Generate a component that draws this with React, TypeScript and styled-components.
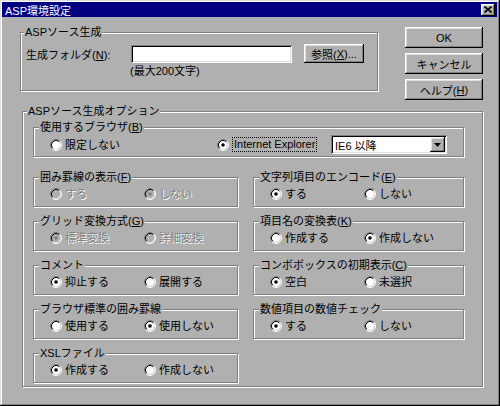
import React from 'react';
import styled, { createGlobalStyle, css } from 'styled-components';

const face = css`
  background: repeating-conic-gradient(#aaaaaa 0 25%, #b6b6b6 0 50%) 0 0 / 2px 2px fixed;
`;

const raised = css`
  box-shadow: inset -1px -1px #000, inset 1px 1px #fff, inset -2px -2px #808080, inset 2px 2px #dfdfdf;
`;

const sunken = css`
  box-shadow: inset 1px 1px #808080, inset -1px -1px #fff, inset 2px 2px #000, inset -2px -2px #dfdfdf;
`;

const GlobalStyle = createGlobalStyle`
  html, body {
    margin: 0;
    padding: 0;
  }
  body {
    font-family: "Liberation Sans", "Noto Sans CJK JP", sans-serif;
    font-size: 11px;
    color: #000;
  }
  u {
    text-decoration: underline;
    text-underline-offset: 1px;
  }
`;

const Window = styled.div`
  ${face}
  width: 500px;
  height: 406px;
  box-sizing: border-box;
  padding: 2px 3px 3px 2px;
  box-shadow: inset -1px -1px #000, inset 1px 1px #dfdfdf, inset -2px -2px #808080, inset 2px 2px #fff;
  display: flex;
  flex-direction: column;
`;

const TitleBar = styled.div`
  height: 15px;
  background: #000080;
  color: #fff;
  display: flex;
  align-items: center;
  justify-content: space-between;
  padding: 0 2px 0 3px;
  font-size: 11px;
`;

const CloseButton = styled.div`
  ${face}
  ${raised}
  width: 14px;
  height: 12px;
  display: flex;
  align-items: center;
  justify-content: center;
`;

const Body = styled.div`
  padding: 9px 0 0 18px;
`;

const TopRow = styled.div`
  display: flex;
  align-items: flex-start;
  gap: 27px;
`;

const Group = styled.fieldset<{ $width?: number }>`
  margin: 0;
  padding: 0;
  min-width: 0;
  box-sizing: border-box;
  width: ${p => (p.$width ? `${p.$width}px` : 'auto')};
  border: 1px solid #808080;
  box-shadow: inset 1px 1px #fff, 1px 1px #fff;
`;

const Legend = styled.legend<{ $inset: number }>`
  ${face}
  margin-left: ${p => p.$inset}px;
  padding: 0 1px;
  line-height: 13px;
`;

const SourceBody = styled.div`
  padding: 5px 0 12px 5px;
`;

const FolderRow = styled.div`
  display: flex;
  align-items: center;
  height: 19px;
`;

const FieldLabel = styled.span`
  width: 105px;
`;

const TextInput = styled.div`
  ${sunken}
  background: #fff;
  width: 161px;
  height: 18px;
  box-sizing: border-box;
`;

const PushButton = styled.div<{ $width: number; $height: number }>`
  ${face}
  ${raised}
  width: ${p => p.$width}px;
  height: ${p => p.$height}px;
  box-sizing: border-box;
  display: flex;
  align-items: center;
  justify-content: center;
`;

const BrowseButton = styled(PushButton)`
  margin-left: 12px;
`;

const Hint = styled.div`
  margin: 1px 0 0 104px;
  line-height: 14px;
`;

const ButtonColumn = styled.div`
  display: flex;
  flex-direction: column;
  gap: 5px;
  padding-top: 1px;
`;

const OptionsGroup = styled(Group)`
  margin: 5px 0 0 2px;
`;

const OptionsBody = styled.div`
  padding: 3px 18px 3px 10px;
`;

const BrowserRow = styled.div`
  display: flex;
  align-items: center;
  height: 19px;
  padding: 1px 16px 2px 16px;
`;

const FirstBrowser = styled.div`
  width: 167px;
`;

const Select = styled.div`
  ${sunken}
  background: #fff;
  margin-left: auto;
  width: 116px;
  height: 19px;
  box-sizing: border-box;
  padding: 2px;
  display: flex;
  align-items: center;
`;

const SelectText = styled.span`
  flex: 1;
  padding-left: 2px;
`;

const SelectArrow = styled.div`
  ${face}
  ${raised}
  width: 15px;
  height: 15px;
  display: flex;
  align-items: center;
  justify-content: center;
`;

const OptionGrid = styled.div`
  display: grid;
  grid-template-columns: 205px 211px;
  column-gap: 15px;
  row-gap: 8px;
  margin-top: 14px;
`;

const ChoiceRow = styled.div`
  display: grid;
  grid-template-columns: 94px auto;
  align-items: center;
  padding: 3px 0 5px 16px;
  line-height: 14px;
`;

const RadioOption = styled.label<{ $disabled?: boolean }>`
  display: flex;
  align-items: center;
  gap: 3px;
  line-height: 14px;
  color: ${p => (p.$disabled ? '#808080' : '#000')};
  text-shadow: ${p => (p.$disabled ? '1px 1px 0 #fff' : 'none')};
`;

const FocusText = styled.span`
  border: 1px dotted #000;
  padding: 0 1px;
  line-height: 13px;
`;

const RadioSvg = styled.svg`
  flex: none;
  display: block;
`;

const Radio = ({ checked, disabled }: { checked?: boolean; disabled?: boolean }) => (
  <RadioSvg width="12" height="12" viewBox="0 0 12 12">
    <circle cx="6" cy="6" r="4.2" fill={disabled ? '#b0b0b0' : '#fff'} />
    <path d="M2.11 9.89 A5.5 5.5 0 0 1 9.89 2.11" stroke="#808080" fill="none" />
    <path d="M9.89 2.11 A5.5 5.5 0 0 1 2.11 9.89" stroke="#fff" fill="none" />
    <path d="M2.82 9.18 A4.5 4.5 0 0 1 9.18 2.82" stroke="#000" fill="none" />
    <path d="M9.18 2.82 A4.5 4.5 0 0 1 2.82 9.18" stroke="#dfdfdf" fill="none" />
    {checked && <circle cx="6" cy="6" r="1.8" fill={disabled ? '#808080' : '#000'} />}
  </RadioSvg>
);

const Mnemonic = ({ title, k }: { title: string; k?: string }) => (
  <>
    {title}
    {k && (
      <>
        (<u>{k}</u>)
      </>
    )}
  </>
);

interface ChoiceGroupData {
  title: string;
  k?: string;
  options: [string, string];
  checked: number;
  disabled?: boolean;
}

// grid order: left, right, left, right ...
const choiceGroups: ChoiceGroupData[] = [
  { title: '囲み罫線の表示', k: 'F', options: ['する', 'しない'], checked: 1, disabled: true },
  { title: '文字列項目のエンコード', k: 'E', options: ['する', 'しない'], checked: 0 },
  { title: 'グリッド変換方式', k: 'G', options: ['標準変換', '詳細変換'], checked: 0, disabled: true },
  { title: '項目名の変換表', k: 'K', options: ['作成する', '作成しない'], checked: 1 },
  { title: 'コメント', options: ['抑止する', '展開する'], checked: 0 },
  { title: 'コンボボックスの初期表示', k: 'C', options: ['空白', '未選択'], checked: 0 },
  { title: 'ブラウザ標準の囲み罫線', options: ['使用する', '使用しない'], checked: 1 },
  { title: '数値項目の数値チェック', options: ['する', 'しない'], checked: 0 },
  { title: 'XSLファイル', options: ['作成する', '作成しない'], checked: 0 },
];

export default function App() {
  return (
    <>
      <GlobalStyle />
      <Window>
        <TitleBar>
          <span>ASP環境設定</span>
          <CloseButton>
            <svg width="8" height="7" viewBox="0 0 8 7">
              <path d="M0.5 0.5 L7.5 6.5 M7.5 0.5 L0.5 6.5" stroke="#000" strokeWidth="1.6" />
            </svg>
          </CloseButton>
        </TitleBar>
        <Body>
          <TopRow>
            <Group $width={358}>
              <Legend $inset={3}>ASPソース生成</Legend>
              <SourceBody>
                <FolderRow>
                  <FieldLabel>
                    生成フォルダ(<u>N</u>):
                  </FieldLabel>
                  <TextInput />
                  <BrowseButton $width={60} $height={19}>
                    参照(<u>X</u>)...
                  </BrowseButton>
                </FolderRow>
                <Hint>(最大200文字)</Hint>
              </SourceBody>
            </Group>
            <ButtonColumn>
              <PushButton $width={78} $height={21}>OK</PushButton>
              <PushButton $width={78} $height={21}>キャンセル</PushButton>
              <PushButton $width={78} $height={21}>
                ヘルプ(<u>H</u>)
              </PushButton>
            </ButtonColumn>
          </TopRow>

          <OptionsGroup $width={461}>
            <Legend $inset={4}>ASPソース生成オプション</Legend>
            <OptionsBody>
              <Group>
                <Legend $inset={5}>
                  <Mnemonic title="使用するブラウザ" k="B" />
                </Legend>
                <BrowserRow>
                  <FirstBrowser>
                    <RadioOption>
                      <Radio />
                      限定しない
                    </RadioOption>
                  </FirstBrowser>
                  <RadioOption>
                    <Radio checked />
                    <FocusText>Internet Explorer</FocusText>
                  </RadioOption>
                  <Select>
                    <SelectText>IE6 以降</SelectText>
                    <SelectArrow>
                      <svg width="7" height="4" viewBox="0 0 7 4">
                        <path d="M0 0 H7 L3.5 4 Z" fill="#000" />
                      </svg>
                    </SelectArrow>
                  </Select>
                </BrowserRow>
              </Group>

              <OptionGrid>
                {choiceGroups.map(g => (
                  <Group key={g.title}>
                    <Legend $inset={5}>
                      <Mnemonic title={g.title} k={g.k} />
                    </Legend>
                    <ChoiceRow>
                      {g.options.map((o, i) => (
                        <RadioOption key={o} $disabled={g.disabled}>
                          <Radio checked={g.checked === i} disabled={g.disabled} />
                          {o}
                        </RadioOption>
                      ))}
                    </ChoiceRow>
                  </Group>
                ))}
              </OptionGrid>
            </OptionsBody>
          </OptionsGroup>
        </Body>
      </Window>
    </>
  );
}
